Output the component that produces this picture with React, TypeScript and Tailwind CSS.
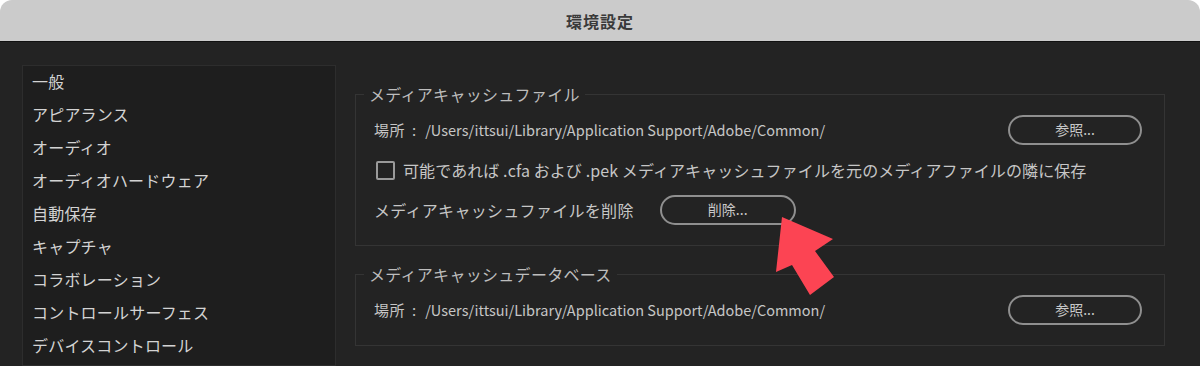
import React from "react";

const items = [
  "一般",
  "アピアランス",
  "オーディオ",
  "オーディオハードウェア",
  "自動保存",
  "キャプチャ",
  "コラボレーション",
  "コントロールサーフェス",
  "デバイスコントロール",
];

const PATH = "/Users/ittsui/Library/Application Support/Adobe/Common/";

function PillButton({ label, w }: { label: string; w: string }) {
  return (
    <button
      className={`h-[30px] ${w} rounded-full border-2 border-[#8f8f8f] text-[14px] text-[#c9c9c9] flex items-center justify-center pb-[1px]`}
    >
      {label}
    </button>
  );
}

function Location() {
  return (
    <span className="flex items-baseline">
      <span className="text-[15px] tracking-[0.5px]">場所</span>
      <span className="text-[15px] ml-[7px] mr-[9px]">:</span>
      <span className="text-[14.5px]">{PATH}</span>
    </span>
  );
}

export default function App() {
  return (
    <div
      className="relative w-[1200px] h-[366px] overflow-hidden bg-white"
      style={{ fontFamily: '"Noto Sans CJK JP", "Noto Sans", sans-serif' }}
    >
      <div className="flex flex-col h-full">
        <div className="h-[42px] shrink-0 rounded-t-[12px] bg-[#cbcbcb] border-b-[1.5px] border-[#111] flex items-center justify-center">
          <span className="text-[16px] font-bold text-[#3a3a3a] tracking-[1px]">環境設定</span>
        </div>
        <div className="flex-1 bg-[#232323] flex pl-[22px] pt-[23px] min-h-0">
          <div className="w-[314px] shrink-0 h-full bg-[#1e1e1e] border border-[#2d2d2d] flex flex-col">
            {items.map((t) => (
              <div key={t} className="h-[33px] shrink-0 flex items-center px-[9px] pb-[3px] text-[16px] tracking-[0.2px] text-[#d3d3d3]">
                {t}
              </div>
            ))}
          </div>
          <div className="ml-[19px] w-[810px] shrink-0 flex flex-col pt-[17px]">
            <fieldset className="border border-[#343434] px-[18px] pr-[22px] pb-[20px]">
              <legend className="-ml-[10px] px-[5px] h-[24px] leading-[24px] text-[16px] tracking-[0.3px] text-[#bdbdbd]">
                メディアキャッシュファイル
              </legend>
              <div className="flex flex-col gap-[10px] pt-[9px]">
                <div className="h-[30px] flex items-center justify-between text-[#c6c6c6]">
                  <Location />
                  <PillButton label="参照..." w="w-[134px]" />
                </div>
                <div className="h-[30px] flex items-center text-[16px] text-[#c6c6c6]">
                  <span className="w-[19px] h-[19px] border-2 border-[#9a9a9a] rounded-[2px] mr-[8px] ml-[2px] shrink-0" />
                  <span className="tracking-[0.1px]">可能であれば .cfa および .pek メディアキャッシュファイルを元のメディアファイルの隣に保存</span>
                </div>
                <div className="h-[30px] flex items-center text-[16px] text-[#c6c6c6]">
                  <span className="tracking-[0.3px]">メディアキャッシュファイルを削除</span>
                  <span className="ml-[26px]">
                    <PillButton label="削除..." w="w-[136px]" />
                  </span>
                </div>
              </div>
            </fieldset>
            <fieldset className="mt-[16px] border border-[#343434] px-[18px] pr-[22px] pb-[20px]">
              <legend className="-ml-[10px] px-[5px] h-[24px] leading-[24px] text-[16px] tracking-[0.3px] text-[#bdbdbd]">
                メディアキャッシュデータベース
              </legend>
              <div className="flex flex-col pt-[9px]">
                <div className="h-[30px] flex items-center justify-between text-[#c6c6c6]">
                  <Location />
                  <PillButton label="参照..." w="w-[134px]" />
                </div>
              </div>
            </fieldset>
          </div>
        </div>
      </div>
      <svg className="absolute left-0 top-0" width="1200" height="366" viewBox="0 0 1200 366">
        <polygon
          points="782,217 833,239 815,251 834,277 810,295 792,265 776,272"
          fill="#fc4453"
        />
      </svg>
    </div>
  );
}
